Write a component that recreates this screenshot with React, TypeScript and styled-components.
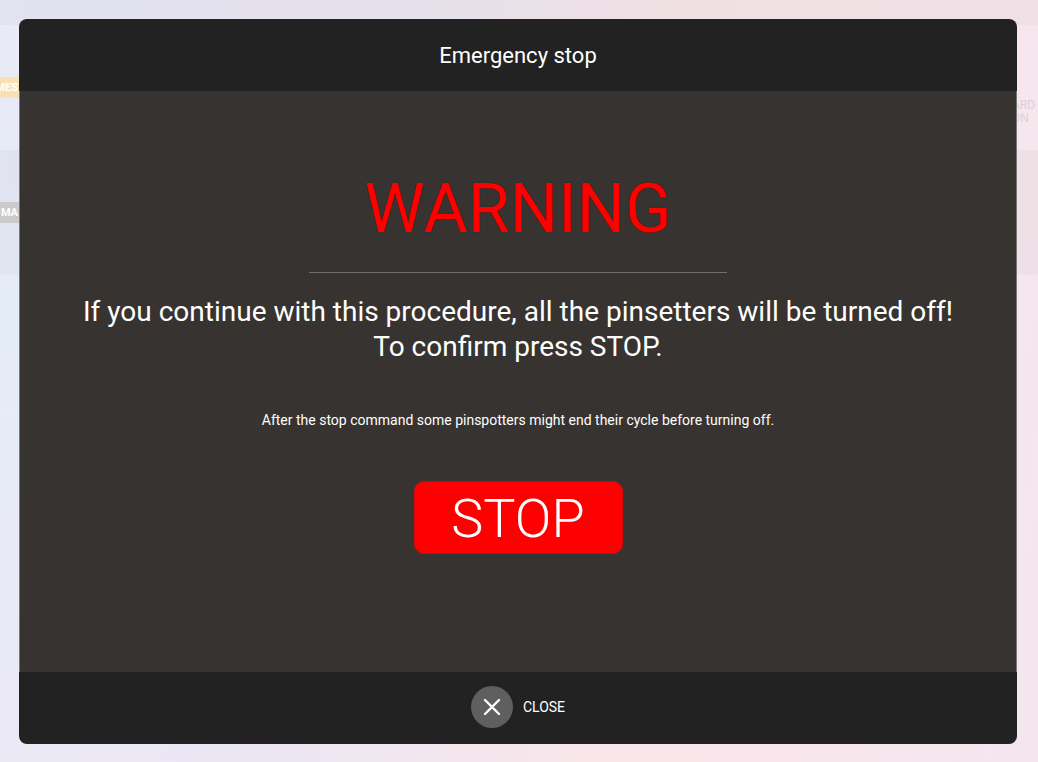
import React from "react";
import styled, { createGlobalStyle } from "styled-components";

const GlobalStyle = createGlobalStyle`
  *, *::before, *::after { box-sizing: border-box; }
  body {
    margin: 0;
    font-family: Roboto, "Liberation Sans", sans-serif;
    color: #fff;
  }
`;

const Screen = styled.div`
  position: relative;
  min-height: 100vh;
  overflow: hidden;
  background:
    radial-gradient(circle at 0% 42%, #e4ecf8 0%, rgba(228, 236, 248, 0) 40%),
    linear-gradient(100deg, #ebe9f5 0%, #ece6f3 35%, #f8e6ea 60%, #f8e6ed 85%, #f3e6ef 100%);
`;

const LaneRow = styled.div<{ $height: number; $shaded?: boolean }>`
  display: flex;
  justify-content: space-between;
  align-items: flex-start;
  height: ${(p) => p.$height}px;
  background: ${(p) => (p.$shaded ? "rgba(80, 80, 80, 0.04)" : "transparent")};
`;

const LaneTag = styled.span<{ $color: string }>`
  width: 19px;
  margin-top: 52px;
  padding-right: 1px;
  display: flex;
  justify-content: flex-end;
  white-space: nowrap;
  font-size: 11px;
  font-weight: 700;
  line-height: 21px;
  background: ${(p) => p.$color};
`;

const LaneNote = styled.span`
  width: 26px;
  margin-top: 74px;
  display: flex;
  flex-direction: column;
  font-size: 12px;
  line-height: 13px;
  color: #dfcfd5;
`;

const Overlay = styled.div`
  position: absolute;
  inset: 0;
  display: flex;
  padding: 19px 21px 18px 19px;
`;

const Dialog = styled.section`
  flex: 1;
  display: flex;
  flex-direction: column;
  overflow: hidden;
  border-radius: 8px;
  background: #222;
`;

const Header = styled.header`
  display: flex;
  align-items: center;
  justify-content: center;
  height: 72px;
  padding-top: 2px;
`;

const Title = styled.h1`
  margin: 0;
  font-size: 22px;
  font-weight: 400;
  line-height: 28px;
`;

const Body = styled.div`
  flex: 1;
  display: flex;
  flex-direction: column;
  align-items: center;
  padding: 78px 24px 0;
  text-align: center;
  background: #373330;
  border: solid #77777a;
  border-width: 0 1px;
`;

const Warning = styled.h2`
  margin: 0;
  font-size: 68px;
  font-weight: 400;
  line-height: 80px;
  color: #f00;
  text-shadow: 0 0 1px rgba(0, 0, 0, 0.7);
`;

const Divider = styled.hr`
  width: 44%;
  margin: 23px 0 21px;
  border: 0;
  border-top: 1px solid #6e7172;
`;

const Message = styled.p`
  margin: 0;
  font-size: 28px;
  font-weight: 400;
  line-height: 35px;
`;

const Note = styled.p`
  margin: 46px 0 51px;
  font-size: 14px;
  line-height: 20px;
`;

const StopButton = styled.button`
  width: 209px;
  height: 73px;
  padding: 2px 0 0;
  border: 1px solid #d40808;
  border-radius: 10px;
  background: #f00;
  color: #fff;
  font-family: inherit;
  font-size: 54px;
  font-weight: 300;
  line-height: 69px;
  cursor: pointer;
`;

const Footer = styled.footer`
  display: flex;
  align-items: center;
  justify-content: center;
  height: 72px;
  padding-bottom: 2px;
`;

const CloseButton = styled.button`
  display: flex;
  align-items: center;
  gap: 10px;
  padding: 0;
  border: 0;
  background: none;
  color: #fff;
  font-family: inherit;
  font-size: 14px;
  cursor: pointer;
`;

const CloseDisc = styled.span`
  display: grid;
  place-items: center;
  width: 42px;
  height: 42px;
  border-radius: 50%;
  background: #5f5f5f;
`;

export default function App() {
  return (
    <>
      <GlobalStyle />
      <Screen>
        <div aria-hidden="true">
          <LaneRow $height={25} $shaded />
          <LaneRow $height={125}>
            <LaneTag $color="#fbdfb4">MES</LaneTag>
            <LaneNote>
              <span>ARD</span>
              <span>ON</span>
            </LaneNote>
          </LaneRow>
          <LaneRow $height={125} $shaded>
            <LaneTag $color="#cbcbcb">MA</LaneTag>
          </LaneRow>
        </div>
        <Overlay>
          <Dialog role="dialog" aria-modal="true" aria-labelledby="dialog-title">
            <Header>
              <Title id="dialog-title">Emergency stop</Title>
            </Header>
            <Body>
              <Warning>WARNING</Warning>
              <Divider />
              <Message>
                If you continue with this procedure, all the pinsetters will be turned off!
                <br />
                To confirm press STOP.
              </Message>
              <Note>
                After the stop command some pinspotters might end their cycle before turning off.
              </Note>
              <StopButton type="button">STOP</StopButton>
            </Body>
            <Footer>
              <CloseButton type="button">
                <CloseDisc>
                  <svg width="18" height="18" viewBox="0 0 18 18" aria-hidden="true">
                    <path
                      d="M2 2L16 16M16 2L2 16"
                      stroke="#fff"
                      strokeWidth="2.4"
                      strokeLinecap="round"
                    />
                  </svg>
                </CloseDisc>
                CLOSE
              </CloseButton>
            </Footer>
          </Dialog>
        </Overlay>
      </Screen>
    </>
  );
}
